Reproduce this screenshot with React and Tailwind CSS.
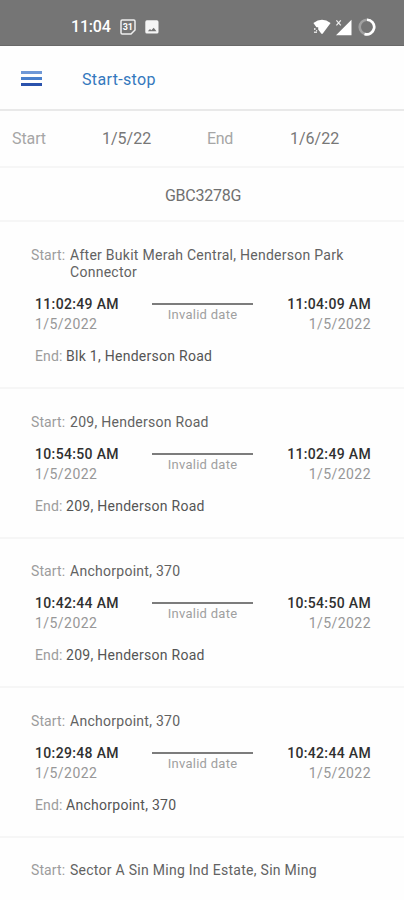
import React from 'react';

const trips = [
  { id: 1, from: 'After Bukit Merah Central, Henderson Park Connector', to: 'Blk 1, Henderson Road', startTime: '11:02:49 AM', endTime: '11:04:09 AM', date: '1/5/2022' },
  { id: 2, from: '209, Henderson Road', to: '209, Henderson Road', startTime: '10:54:50 AM', endTime: '11:02:49 AM', date: '1/5/2022' },
  { id: 3, from: 'Anchorpoint, 370', to: '209, Henderson Road', startTime: '10:42:44 AM', endTime: '10:54:50 AM', date: '1/5/2022' },
  { id: 4, from: 'Anchorpoint, 370', to: 'Anchorpoint, 370', startTime: '10:29:48 AM', endTime: '10:42:44 AM', date: '1/5/2022' },
  { id: 5, from: 'Sector A Sin Ming Ind Estate, Sin Ming' },
];

const StatusBar = () => (
  <div className="flex h-[46px] shrink-0 items-center border-b border-[#696969] bg-[#757575] pt-[9px] pr-[28px] pl-[71px] text-white">
    <span className="w-[49px] text-[16px] font-medium tracking-[-0.2px]">11:04</span>
    {/* Calendar */}
    <svg width="16" height="16" viewBox="0 0 16 16" fill="none">
      <path d="M2.2 1h11.6q1.2 0 1.2 1.2V11l-4 4H2.2Q1 15 1 13.8V2.2Q1 1 2.2 1z" stroke="#eee" strokeWidth="1.5" />
      <text x="7.8" y="11.2" textAnchor="middle" fontSize="9" fontWeight="700" fill="#fff" fontFamily="Roboto, sans-serif">31</text>
    </svg>
    {/* Picture */}
    <svg className="ml-[9px]" width="14" height="14" viewBox="0 0 14 14">
      <rect x="0.3" y="0.3" width="13.2" height="13.2" rx="1.6" fill="#f5f5f5" />
      <path d="M2.8 11.3 5 9l1.3 1.3 2.4-2.6 2.8 3.6z" fill="#757575" />
    </svg>
    <div className="ml-auto flex items-center">
      {/* Wifi */}
      <svg width="18" height="16" viewBox="0 0 18 16" fill="#fff">
        <path d="M0.4 4Q9-2.4 17.6 4L9.8 14.6Q9 15.4 8.2 14.6L5.2 10.5V8.2H3.4z" />
        <path d="M1 9h1.5v2H1zM3 11h1.2v1.2H3zM1 12.5h3V14H1z" fill="#ddd" />
      </svg>
      {/* Signal, no data */}
      <svg className="ml-[4px]" width="17" height="17" viewBox="0 0 17 17">
        <path d="M16.5 0.8V16.3H1z" fill="#fff" />
        <path d="M1.4 1.4 5.8 6.4M5.8 1.4 1.4 6.4" stroke="#eee" strokeWidth="1.2" />
      </svg>
      {/* Battery ring */}
      <svg className="ml-[6px]" width="18" height="18" viewBox="0 0 18 18" fill="none" strokeWidth="2.6">
        <circle cx="9" cy="9" r="7.3" stroke="#a0a0a0" />
        <path d="M9 1.7a7.3 7.3 0 1 1-2.5 14.2" stroke="#fff" />
      </svg>
    </div>
  </div>
);

const Header = () => (
  <header className="flex h-[65px] shrink-0 items-center border-b-2 border-[#e9e9e9] pl-[21px]">
    <button className="mt-[1px] flex w-[61px] flex-col gap-[3px]" aria-label="Menu">
      <span className="h-[3px] w-[21px] bg-[#6f98d6]" />
      <span className="h-[3px] w-[21px] bg-[#4a80cc]" />
      <span className="h-[3px] w-[21px] bg-[#2a52ac]" />
    </button>
    <h1 className="mt-[4px] text-[16px] tracking-[0.35px] text-[#3478bd]">Start-stop</h1>
  </header>
);

const TripCard = ({ trip }) => (
  <div className="shrink-0 border-b-2 border-[#f6f6f6] pt-[24.6px] pr-[33px] pb-[22px] pl-[31px] text-[14px] leading-[17px] tracking-[0.27px]">
    <div className="flex">
      <span className="w-[39px] shrink-0 tracking-[0.1px] text-[#9c9c9c]">Start:</span>
      <span className="w-[290px] shrink-0 text-[#626262]">{trip.from}</span>
    </div>
    {trip.to && (
      <>
        <div className="mt-[13px] flex justify-between pl-[4px] leading-[20px]">
          <div className="w-[117px]">
            <p className="font-medium tracking-[0.34px] text-[#303030]">{trip.startTime}</p>
            <p className="tracking-[0.45px] text-[#979797]">{trip.date}</p>
          </div>
          <div className="w-[101px] pt-[9px] text-center">
            <div className="h-[2px] bg-[#7c7c7c]" />
            <p className="mt-[2px] text-[13px] leading-[16px] text-[#a0a0a0]">Invalid date</p>
          </div>
          <div className="w-[118px] text-right">
            <p className="font-medium tracking-[0.34px] text-[#303030]">{trip.endTime}</p>
            <p className="tracking-[0.45px] text-[#979797]">{trip.date}</p>
          </div>
        </div>
        <div className="mt-[14px] flex pl-[4px]">
          <span className="w-[31px] shrink-0 tracking-[0.1px] text-[#9c9c9c]">End:</span>
          <span className="text-[#555555]">{trip.to}</span>
        </div>
      </>
    )}
  </div>
);

export default function App() {
  return (
    <div className="flex h-[900px] w-[404px] flex-col overflow-hidden bg-[#fefefe] font-['Roboto',sans-serif]">
      <StatusBar />
      <Header />
      <div className="flex h-[57px] shrink-0 items-center border-b-2 border-[#f6f6f6] pt-[1px] pl-[12px] text-[16px] text-[#777777]">
        <span className="w-[90px] tracking-[-0.1px] text-[#a6a6a6]">Start</span>
        <span className="w-[105px]">1/5/22</span>
        <span className="w-[83px] tracking-[-0.3px] text-[#a6a6a6]">End</span>
        <span>1/6/22</span>
      </div>
      <div className="flex h-[54.4px] shrink-0 items-center justify-center border-b-2 border-[#f6f6f6] pt-[3px] pl-[2px] text-[16px] tracking-[-0.25px] text-[#707070]">
        GBC3278G
      </div>
      {trips.map((trip) => (
        <TripCard key={trip.id} trip={trip} />
      ))}
    </div>
  );
}
